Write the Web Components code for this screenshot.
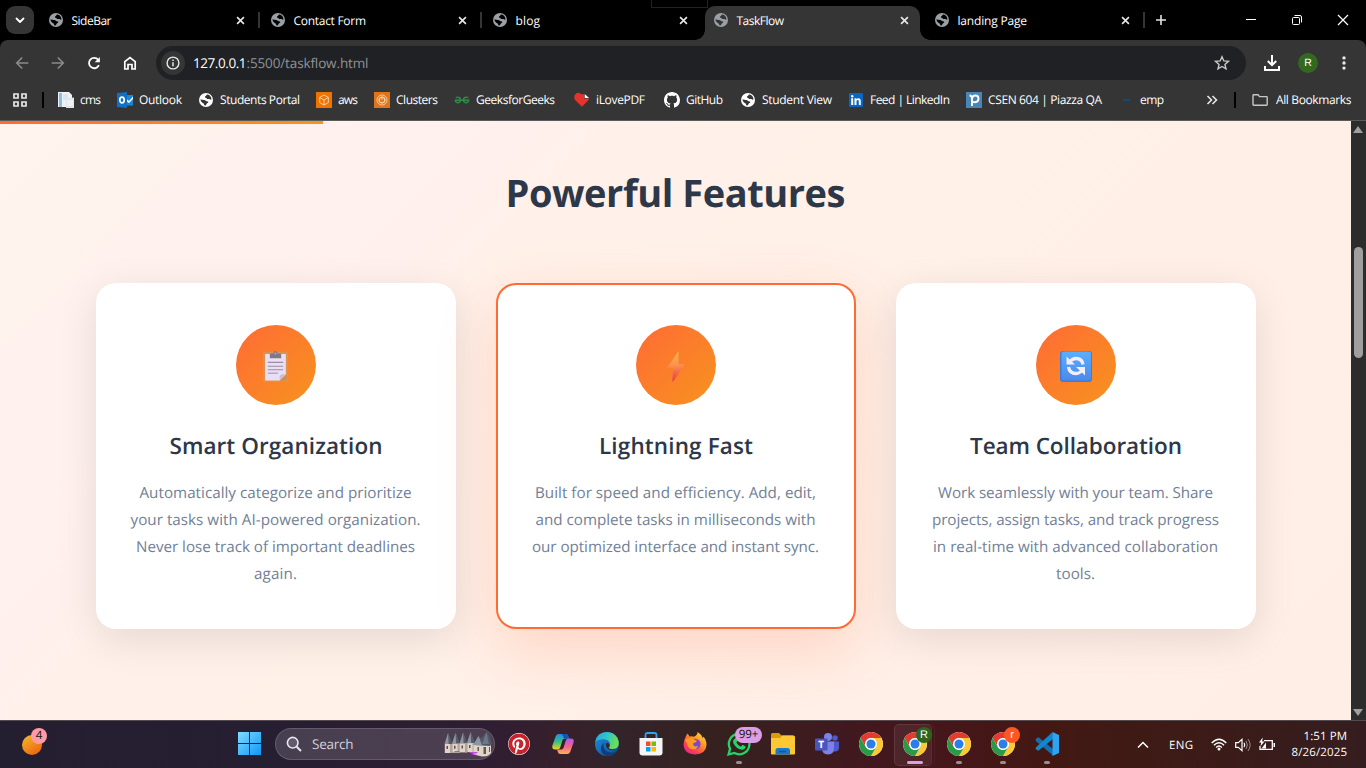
<!DOCTYPE html>
<html lang="en">
<head>
<meta charset="utf-8">
<title>TaskFlow</title>
<style>
html,body{margin:0;padding:0;height:100%;overflow:hidden;background:#000}
body{font-family:"Open Sans","Noto Sans",sans-serif;text-rendering:geometricPrecision}
</style>
</head>
<body>
<desk-top></desk-top>
<script>
const S = (vb, body) => `<svg viewBox="${vb}" xmlns="http://www.w3.org/2000/svg">${body}</svg>`;
const globe = (fg, bg) => S('0 0 14 14', `<circle cx="7" cy="7" r="7" fill="${fg}"/>
<path d="M8.2 1.500c1.700.2 3 1.200 3.700 2.600.3.8.5 1.600.5 2.400-.6.5-1 .2-1.500-.2-.5-.5-1.300-.3-2-.3-.9 0-1.200-.6-1.800-1-.5-.3-1.200-.3-1.200-1 0-.8 1-.7 1.200-1.300.1-.5.500-1 1.100-1.200z" fill="${bg}"/>
<path d="M1.500 6.300c1.200.2 2 .7 3.100.7 1 0 1.900.2 2.500 1 .4.600 1.300.2 1.900.6.500.4.200 1.200-.4 1.400-.9.3-1 .9-1.300 1.500-.2.500-.6.900-1.300.9-.8-.1-.9-.7-1-1.400-.1-.6-.7-.7-1.300-1C2.500 9.400 1.600 8 1.500 6.300z" fill="${bg}"/>`);
const chrome = S('0 0 24 24', `<circle cx="12" cy="12" r="12" fill="#fff"/>
<path d="M1.610 6A12 12 0 0 1 22.390 6L12 6A6 6 0 0 0 6.800 15Z" fill="#e33b2e"/>
<path transform="rotate(120 12 12)" d="M1.610 6A12 12 0 0 1 22.390 6L12 6A6 6 0 0 0 6.800 15Z" fill="#fcc934"/>
<path transform="rotate(240 12 12)" d="M1.610 6A12 12 0 0 1 22.390 6L12 6A6 6 0 0 0 6.800 15Z" fill="#2a9a47"/>
<circle cx="12" cy="12" r="5.700" fill="#fff"/><circle cx="12" cy="12" r="4.500" fill="#2b7de9"/>`);
const box = (c, in_) => S('0 0 16 16', `<rect width="16" height="16" fill="${c}"/>${in_}`);
const st = 'fill="none" stroke-linecap="round" stroke-linejoin="round"';
const turret = x => `<path d="M${x} 12l3.500-11 4 11z" fill="#8d95a2"/><path d="M${x+3.5} 1l4.200 11h-3.500z" fill="#525b69"/><path d="M${x+.3} 12h7.500v9h-7.500z" fill="#e0d5cb"/><path d="M${x+5.500} 12h2.300v9h-2.300z" fill="#b3a49b"/><path d="M${x+2} 14h1.500v3h-1.500z" fill="#62503f"/>`;

const ICONS = {
  globe: globe('#9aa0a6', '#000'), globeTab: globe('#9aa0a6', '#353535'), globeWhite: globe('#fff', '#353535'),
  down: S('0 0 10 10', `<path ${st} stroke="#fff" stroke-width="1.800" d="M1.500 3.500L5 7l3.500-3.500"/>`),
  x: S('0 0 10 10', `<path fill="none" stroke="#e8e8e8" stroke-width="1.800" d="M1.200 1.200l7.600 7.600M8.800 1.200L1.200 8.800"/>`),
  plus: S('0 0 12 12', `<path d="M6 1v10M1 6h10" stroke="#e3e3e3" stroke-width="1.600"/>`),
  min: S('0 0 12 12', `<path d="M1 5.500h10" stroke="#fff"/>`),
  max: S('0 0 12 12', `<rect x="1.500" y="3.500" width="7" height="7" rx="1" fill="none" stroke="#fff"/><path d="M3.500 1.500H9a1.500 1.500 0 0 1 1.500 1.500v5.500" fill="none" stroke="#fff"/>`),
  close: S('0 0 12 12', `<path d="M1 1l10 10M11 1L1 11" stroke="#fff" stroke-width="1.200"/>`),
  back: S('0 0 14 14', `<path fill="none" stroke="#8b8b8b" stroke-width="1.600" d="M13.300 7H2M7.200 1.500L1.700 7l5.500 5.500"/>`),
  fwd: S('0 0 14 14', `<path fill="none" stroke="#8b8b8b" stroke-width="1.600" d="M.700 7H12M6.800 1.500L12.300 7l-5.500 5.500"/>`),
  reload: S('0 0 14 14', `<path fill="none" stroke="#fff" stroke-width="1.800" d="M11.900 9.200A5.200 5.200 0 1 1 11.200 3.700"/><path fill="#fff" d="M12.900 1v5.200H7.700z"/>`),
  home: S('0 0 14 14', `<path fill="none" stroke="#fff" stroke-width="1.700" d="M1.800 5.700L7 1.500l5.200 4.200v7.300H9V8.500H5V13H1.800z"/>`),
  info: S('0 0 14 14', `<circle cx="7" cy="7" r="5.900" fill="none" stroke="#e8e8e8" stroke-width="1.400"/><path d="M7 6.300v4M7 3.600v1.500" stroke="#e8e8e8" stroke-width="1.500"/>`),
  star: S('0 0 16 16', `<path fill="none" stroke="#c9c9c9" stroke-width="1.400" d="M8 1.700l1.850 4.250 4.600.4-3.500 3.050 1.050 4.500L8 11.500l-4 2.400 1.050-4.500-3.500-3.050 4.600-.4z"/>`),
  download: S('0 0 16 16', `<path fill="none" stroke="#fff" stroke-width="2" d="M8 0v9.500M3.800 6L8 10.200 12.200 6M1 11v4h14v-4"/>`),
  dots: S('0 0 14 14', `<g fill="#e8e8e8"><circle cx="7" cy="1.900" r="1.700"/><circle cx="7" cy="7" r="1.700"/><circle cx="7" cy="12.100" r="1.700"/></g>`),
  apps: S('0 0 14 14', `<g fill="none" stroke="#e8e8e8" stroke-width="1.700"><path d="M1 1h4v4H1zM9 1h4v4H9zM1 9h4v4H1zM9 9h4v4H9z"/></g>`),
  more: S('0 0 12 12', `<path fill="none" stroke="#e8e8e8" stroke-width="1.600" d="M1.500 2l4 4-4 4M6.500 2l4 4-4 4"/>`),
  folder: S('0 0 16 12', `<path fill="none" stroke="#c7c7c7" stroke-width="1.400" d="M1 1.500q0-.7.700-.7H6l1.600 1.800h7q.6 0 .6.700v7.200q0 .7-.7.700H1.700q-.7 0-.7-.7z"/>`),
  cms: S('0 0 16 16', `<path d="M0 0h11l3 3v12H0z" fill="#eef2f6"/><path d="M1 1h3v14H1z" fill="#8fbce0"/><path d="M5 3h5M5 5h5M5 7h4" stroke="#ccd6df"/><path d="M8 6.500l8-1V16H8z" fill="#dfe5ea"/><path d="M9 9h6M9 11h6M9 13h6" stroke="#fff"/>`),
  outlook: S('0 0 16 16', `<path d="M9 3h7v10H9z" fill="#fff"/><path d="M9 3h7v1.500L12 9 9 6.500zM9 9l3 2 4-4v6.500H9z" fill="#1a86d9"/><path d="M0 1l10-1v16L0 15z" fill="#0f70c4"/><ellipse cx="5" cy="8" rx="2.200" ry="2.900" fill="none" stroke="#fff" stroke-width="1.700"/>`),
  aws: box('#ee7303', `<path fill="none" stroke="#ffe3c4" stroke-width=".8" d="M8 3l4.300 2.400v5.200L8 13.100l-4.300-2.500V5.400zM3.700 5.400L8 8l4.300-2.600M8 8v5"/>`),
  clusters: box('#df741b', `<g fill="none" stroke="#ffdfba" stroke-width=".8"><circle cx="8" cy="8" r="5"/><circle cx="8" cy="8" r="3.100"/><path d="M8 5l2.600 1.500v3L8 11 5.400 9.500v-3zL8 8"/></g>`),
  gfg: S('0 0 16 16', `<g fill="none" stroke="#2f8d46" stroke-width="1.400"><path d="M1.800 5.900q1-.9 2.400-.7Q6.600 5.600 6.600 8t-2.400 2.700Q1.500 10.700 1.300 8.200h13.400q-.2 2.500-2.900 2.500Q9.400 10.400 9.400 8t2.400-2.800q1.400-.2 2.400.7"/></g>`),
  pdf: S('0 0 16 16', `<path fill="#e5322d" d="M1 2.700Q3-.2 6 1.200L8 2.500 10 1.700V6.500h5.300q0 1-1.400 2.300L8 14.700 1.800 8.800Q-1 5.500 1 2.700z"/><path fill="#fff" d="M10.700 2L15 6h-4.300z"/>`),
  github: S('0 0 16 16', `<path fill="#fff" d="M8 0C3.580 0 0 3.580 0 8c0 3.540 2.290 6.530 5.470 7.590.4.070.55-.17.55-.38 0-.19-.01-.82-.01-1.490-2.010.37-2.530-.49-2.690-.94-.09-.23-.48-.94-.82-1.130-.28-.15-.68-.52-.01-.53.63-.01 1.080.58 1.230.82.72 1.210 1.870.87 2.330.66.07-.52.28-.87.51-1.070-1.780-.2-3.640-.89-3.640-3.950 0-.87.31-1.590.82-2.150-.08-.2-.36-1.020.08-2.120 0 0 .67-.21 2.200.82.64-.18 1.320-.27 2-.27s1.360.09 2 .27c1.530-1.040 2.200-.82 2.200-.82.44 1.100.16 1.920.08 2.120.51.56.82 1.270.82 2.150 0 3.070-1.870 3.750-3.650 3.950.29.25.54.73.54 1.480 0 1.070-.01 1.930-.01 2.200 0 .21.15.46.55.38A8.010 8.010 0 0 0 16 8c0-4.420-3.580-8-8-8z"/>`),
  linkedin: S('0 0 14 14', `<rect width="14" height="14" rx="1" fill="#0a66c2"/><path fill="#fff" d="M2.200 5.300h2V12h-2zM5.500 5.300h1.900v.9c.9-1.500 4.400-1.500 4.400 1.700V12h-2V8.500c0-2.100-2.300-1.900-2.300 0V12h-2z"/><circle cx="3.200" cy="3.200" r="1.200" fill="#fff"/>`),
  piazza: box('#4a86b5', `<path fill="none" stroke="#fff" stroke-width="1.900" d="M3.500 3.500Q6 3.600 6 6.500v7.500M6 7.500q0-4 3.500-4Q12.500 3.500 12.500 6.700T9 10.300q-2 0-3-1.300"/>`),
  emp: S('0 0 16 16', `<path d="M5 8h7" stroke="#0d4f86" stroke-width="1.800"/>`),
  clipboard: S('0 0 24 30', `<rect x="0" y="1" width="24" height="29" rx="1" fill="#dc9352"/><path d="M2 3h20v19.500l-6 6H2z" fill="#e8dff3"/><path d="M16 28.500v-3q0-3 3-3h3z" fill="#cbbcda"/><path d="M16.500 28.500l6-6v6z" fill="#d88a4a"/><path d="M6.500 7V3.500q0-1 1-1H10Q10 0 12 0t2 2.500h2.500q1 0 1 1V7z" fill="#857687"/><circle cx="12" cy="2.500" r="1" fill="#b5a6b8"/><path d="M4.500 11h15M4.500 14.700h15M4.500 18.200h15" stroke="#9c8ca5"/><path d="M4.500 21.500h10" stroke="#b7abc4" stroke-width="1.500"/>`),
  bolt: S('0 0 18 32', `<defs><linearGradient id="g" x2="0" y2="1"><stop stop-color="#f9b645"/><stop offset=".45" stop-color="#fb944b"/><stop offset="1" stop-color="#e8354d"/></linearGradient></defs><path fill="url(#g)" d="M11.500 0L.6 16q-.4 1 .6 1h4.900L5.400 30q0 1.200.9.300L17.300 14.200q.4-1-.7-1h-5V.8q0-.8-.100-.8z"/>`),
  sync: S('0 0 32 31', `<defs><linearGradient id="g" x2="0" y2="1"><stop stop-color="#5aaeff"/><stop offset="1" stop-color="#4a8aea"/></linearGradient></defs><rect width="32" height="31" rx="3" fill="#3f7bdc"/><rect x="1.500" y=".5" width="29.500" height="29" rx="2.500" fill="url(#g)"/><g fill="none" stroke="#f4edff" stroke-width="3.300"><path d="M23 13.500Q22 7.500 16 7.500q-4 0-6.500 4"/><path d="M8.500 16q1 6.500 7.500 6.500 4 0 6.500-4"/></g><path fill="#f4edff" d="M6.500 5.500v8h8.500zM25 24.500v-8.500h-9z"/>`),
  weather: S('0 0 20 20', `<defs><linearGradient id="g" x2=".7" y2="1"><stop stop-color="#f5bd2d"/><stop offset="1" stop-color="#ee6410"/></linearGradient></defs><circle cx="10" cy="10" r="10" fill="url(#g)"/>`),
  win: S('0 0 24 24', `<defs><linearGradient id="g" gradientUnits="userSpaceOnUse" x1="0" y1="0" x2="24" y2="24"><stop stop-color="#7fdcff"/><stop offset="1" stop-color="#0a94f7"/></linearGradient></defs><path fill="url(#g)" d="M0 0h11v11H0zM12 0h11v11H12zM0 12h11v11H0zM12 12h11v11H12z"/>`),
  search: S('0 0 16 16', `<circle cx="6.700" cy="6.700" r="5.300" fill="#746d82" fill-opacity=".6" stroke="#e9e7ee" stroke-width="1.600"/><path d="M10.700 10.700l4.300 4.300" stroke="#e9e7ee" stroke-width="2"/>`),
  castle: S('0 0 48 25', `<g>${turret(0)}</g><g transform="translate(0 -.3)">${turret(7.5)}</g><g transform="translate(0 -.6)">${turret(15)}</g><g transform="translate(0 -.9)">${turret(22.5)}</g><path d="M29 12h17.500v9q-3 4-9 3.500l-8.500-2z" fill="#e0d5cb"/><path d="M29 13l5-9 3 2 5-6q3 1 5.500 12l-2 2z" fill="#4f5866"/><path d="M34 4l3.500 9h-9z" fill="#8c95a2"/><path d="M42 0l-4.500 12h7z" fill="#6d7684"/><path d="M39 15h2.500v7H39zM33 15h1.500v4H33zM44.500 15h1v5h-1z" fill="#6b5747"/><path d="M10 19.500h5M25 20.500h8M27 22h5" stroke="#c24be0" stroke-width="1.200"/>`),
  pinterest: S('0 0 24 24', `<circle cx="12" cy="12" r="11.900" fill="#fff"/><path transform="translate(.6 .6) scale(.95)" fill="#c8232c" d="M12.017 0C5.396 0 .029 5.367.029 11.987c0 5.079 3.158 9.417 7.618 11.162-.105-.949-.199-2.403.041-3.439.219-.937 1.406-5.957 1.406-5.957s-.359-.72-.359-1.781c0-1.663.967-2.911 2.168-2.911 1.024 0 1.518.769 1.518 1.688 0 1.029-.653 2.567-.992 3.992-.285 1.193.6 2.165 1.775 2.165 2.128 0 3.768-2.245 3.768-5.487 0-2.861-2.063-4.869-5.008-4.869-3.410 0-5.409 2.562-5.409 5.199 0 1.033.394 2.143.889 2.741.099.12.112.225.085.345-.09.375-.293 1.199-.334 1.363-.053.225-.172.271-.401.165-1.495-.69-2.433-2.878-2.433-4.646 0-3.776 2.748-7.252 7.920-7.252 4.158 0 7.392 2.967 7.392 6.923 0 4.135-2.607 7.462-6.233 7.462-1.214 0-2.354-.629-2.758-1.379l-.749 2.848c-.269 1.045-1.004 2.352-1.498 3.146 1.123.345 2.306.535 3.550.535 6.607 0 11.985-5.365 11.985-11.987C23.970 5.390 18.592.026 11.985.026z"/>`),
  copilot: S('0 0 24 22', `<defs><linearGradient id="a" x2="0" y2="1"><stop stop-color="#1d8fe8"/><stop offset=".5" stop-color="#35bf8c"/><stop offset="1" stop-color="#f2d21f"/></linearGradient><linearGradient id="b" x2="0" y2="1"><stop stop-color="#b259e6"/><stop offset=".5" stop-color="#f0638f"/><stop offset="1" stop-color="#ffae57"/></linearGradient></defs><path fill="url(#a)" d="M4 2.500Q4.800 0 7.500 0H15q2 0 2.700 2.300L18.500 5H14q-2 0-2.600 2L9 14.500Q8.300 17 6 17H3.500Q-.6 17 .3 13z"/><path fill="#1750c4" d="M10.500 0H15q2 0 2.700 2.300L18.500 5H14.500q-2.500 0-2-2z"/><path fill="url(#b)" d="M20 19.500Q19.200 22 16.500 22H9q-2 0-2.700-2.300L5.500 17H10q2 0 2.600-2L15 7.500Q15.700 5 18 5h2.500q4.100 0 3.200 4z"/>`),
  edge: S('0 0 24 24', `<defs><linearGradient id="a" x2="1" y2=".3"><stop stop-color="#2aa5e0"/><stop offset=".5" stop-color="#2fc3d0"/><stop offset="1" stop-color="#6ee04b"/></linearGradient><linearGradient id="b" x2="1" y2="1"><stop stop-color="#1b8fe0"/><stop offset="1" stop-color="#114a91"/></linearGradient></defs><circle cx="12" cy="12" r="12" fill="url(#b)"/><path fill="url(#a)" d="M.3 10Q2 0 12 0q7 0 10.500 6 2 4 1 7.500Q22 17 17.500 17q-3.500 0-3.500-1.600 1.500-1.400 1-4Q14 7.500 9 7.200 3 7 .3 10z"/><path fill="#0f3e7d" d="M8.500 13q0 7 7 7.500 3 .2 6.500-2-3.500 5.500-10 5.500-5-1-6-6-.7-5 4-8-1.500 1-1.500 3z"/><path fill="#36272a" d="M11.500 11q3-.2 3 2.500-.2 1-1 2 .3 1.500 3.400 2.200 3 .4 6-1.200-2 1.800-4.500 1.800-5.500 0-7.400-4-.5-2.500.5-3.300z"/>`),
  store: S('0 0 24 24', `<path fill="none" stroke="#28a8ea" stroke-width="1.800" d="M6.500 6V3q0-2 2-2h7q2 0 2 2v3"/><path fill="#f4f5f7" d="M.5 6h23v14.500q0 3-3 3h-17q-3 0-3-3z"/><path fill="#f25022" d="M7 9.500h4.500V14H7z"/><path fill="#7fba00" d="M12.500 9.500H17V14h-4.500z"/><path fill="#00a4ef" d="M7 15h4.500v4.500H7z"/><path fill="#ffb900" d="M12.500 15H17v4.500h-4.500z"/>`),
  firefox: S('0 0 24 24', `<defs><linearGradient id="a" x1="1" x2=".2" y2="1"><stop stop-color="#fff04a"/><stop offset=".4" stop-color="#ff9a1f"/><stop offset=".75" stop-color="#ff4052"/><stop offset="1" stop-color="#e5258a"/></linearGradient></defs><path fill="url(#a)" d="M3 4l1.300-2.500Q6 3 6.500 4.500q2-.5 3.500 0Q11.500 5 13 3.500q1.500-1 1.700-3.500 3.500 2 5.300 6.500l.3-2Q23.500 8 23.500 13q-.5 9-11.500 9.500Q1 22 .5 13q0-4 1.500-6.500z"/><circle cx="12.300" cy="12" r="5.300" fill="#7a48d8"/><path fill="#ff9a26" d="M2 7.500q4-2 8-1 1.500 2 4 2-.5 2-3.500 2.500-1 2 .5 3 2 1 4-.5-1 4.500-5.500 3.800Q5 17 4 12z"/>`),
  whatsapp: S('0 0 24 24', `<path fill="none" stroke="#25d366" stroke-width="2.300" d="M1.500 22.500l1.600-5.700A10.300 10.300 0 1 1 7.300 21z"/><path fill="#25d366" d="M8.300 6.200q.8-.3 1.100.4l.9 2.200q.1.500-.9 1.700 1.500 3 4.500 4.200l1.300-1.500q.4-.3.800-.1l2.300 1.200q.5.4 0 1.800-1 1.900-3.500 1.700Q8.500 16.500 6.300 11q-1-3 2-4.800z"/>`),
  explorer: S('0 0 24 22', `<path fill="#d99a0b" d="M0 1.500Q0 0 1.500 0H8l2.500 2.500H22V8H0z"/><path fill="#fcc934" d="M0 5h9l2-2.500h11.500Q24 2.500 24 4v16.500q0 1-1 1H1q-1 0-1-1z"/><path fill="#1878cb" d="M4.500 21.500v-4Q4.500 15 7 15h9.500q2.500 0 2.500 2.500v4z"/><path d="M8 18.500h7" stroke="#0d57a0" stroke-width="1.500"/>`),
  teams: S('0 0 24 22', `<circle cx="20" cy="5" r="2.800" fill="#5059c9"/><path fill="#5059c9" d="M16 8.500h8v6q0 4-4 4h-4z"/><circle cx="13" cy="4" r="4" fill="#7b83eb"/><path fill="#7b83eb" d="M7 8.500h12v6.500q0 6.500-6 6.500T7 15z"/><rect y="5.500" width="12.500" height="12" rx="1" fill="#4b53bc"/><text x="6.200" y="15" text-anchor="middle" font-family="Open Sans" font-weight="700" font-size="10" fill="#fff">T</text>`),
  chrome,
  vscode: S('0 0 24 24', `<path fill="#1070b3" d="M1.300 6.500l1.500-1q.7-.3 1.300.2L18 17v6.500L.8 9q-.6-1.500.5-2.500z"/><path fill="#1485cf" d="M.8 15.500L17.500 0 18 7 4 18.300q-.6.500-1.300.2l-1.500-1q-1-.9-.4-2z"/><path fill="#2ea3f2" d="M17.500 0L24 3v18l-6.500 3z"/>`),
  up: S('0 0 12 12', `<path fill="none" stroke="#fff" stroke-width="1.500" d="M1 8.500l5-5 5 5"/>`),
  wifi: S('0 0 16 13', `<g fill="none" stroke="#fff" stroke-width="1.300"><path d="M.7 5Q8-2.500 15.300 5M2.900 7.300Q8 2.200 13.100 7.300M5.100 9.400Q8 6.700 10.900 9.400"/></g><circle cx="8" cy="11" r="1.500" fill="#fff"/>`),
  volume: S('0 0 16 14', `<path fill="none" stroke="#fff" stroke-width="1.200" d="M.7 4.700h2.600L7 1.300v11.400L3.300 9.300H.7zM9 4.800q1.500 2.200 0 4.400"/><path fill="none" stroke="#98868a" d="M11 3q2.800 4 0 8M13 1q4.300 6 0 12"/>`),
  battery: S('0 0 16 14', `<path fill="none" stroke="#fff" stroke-width="1.300" d="M5 2.600h8.300v8.800H1V8"/><path fill="#fff" d="M14.500 5h1.500v4h-1.500zM2.500 10.500l4.500-6v6zM3.700-.5L0 4.500h2.200L1.500 8.200 5.500 3.500H3.200z"/>`)
};

const define = (name, css, html, setup) => customElements.define(name, class extends HTMLElement {
  constructor() { super(); this.attachShadow({ mode: 'open' }); }
  connectedCallback() {
    if (this.ready) return;
    this.ready = true;
    this.shadowRoot.innerHTML = `<style>*{box-sizing:border-box}${css}</style>${typeof html === 'function' ? html(this) : html}`;
    if (setup) setup(this);
  }
});
const A = (e, n, d = '') => e.getAttribute(n) ?? d;
const ico = (n, w, h = w) => `<ui-icon name="${n}" w="${w}" h="${h}"></ui-icon>`;

define('desk-top', `:host{display:flex;flex-direction:column;width:1366px;height:768px;overflow:hidden}
  .main{display:flex;height:599px}`,
  `<tab-strip></tab-strip><nav-bar></nav-bar><bookmark-bar></bookmark-bar>
   <div class="main"><feature-page></feature-page><scroll-bar></scroll-bar></div><task-bar></task-bar>`);

define('tab-strip', `:host{display:flex;height:40px;background:#000;position:relative;padding-left:6px}
  .drop{width:28px;height:28px;margin:6px 4px 0 0;border-radius:9px;background:#353535;display:grid;place-items:center}
  .tabs{display:grid;grid-template-columns:222px 222px 222px 221px 220px}
  .plus{width:32px;display:grid;place-items:center}
  .win{display:grid;grid-template-columns:46px 46px 46px;margin-left:auto;place-items:center}
  .mark{position:absolute;left:651px;top:-1px;width:57px;height:9px;border:1px solid #222}
  .third{padding-right:16px}.last{padding-left:10px}`,
  `<div class="drop">${ico('down', 10)}</div>
  <div class="tabs"><browser-tab w="40" sep>SideBar</browser-tab><browser-tab w="72.500" sep>Contact Form</browser-tab>
  <browser-tab class="third" w="24.500">blog</browser-tab><browser-tab w="47.500" active>TaskFlow</browser-tab><browser-tab class="last" w="69.500" sep>landing Page</browser-tab></div>
  <div class="plus">${ico('plus', 12)}</div>
  <div class="win">${ico('min', 12)}${ico('max', 12)}${ico('close', 12)}</div><div class="mark"></div>`);

define('browser-tab', `:host{display:flex;align-items:center;position:relative;color:#fff;font-size:12px;padding:0 15px 0 11px}
  :host([active]){padding-left:10px}
  :host([active])::before{content:"";position:absolute;z-index:0;left:1px;right:5px;top:6px;bottom:0;background:#353535;border-radius:10px 10px 0 0}
  .f{position:absolute;bottom:0;width:10px;height:10px;display:none}
  :host([active]) .f{display:block}
  .l{left:-9px;background:radial-gradient(circle at 0 0,transparent 9.500px,#353535 10px)}
  .r{right:-5px;background:radial-gradient(circle at 100% 0,transparent 9.500px,#353535 10px)}
  .c{display:flex;align-items:center;width:100%;position:relative}
  .t{margin-left:8.500px;flex:1}
  .s{position:absolute;right:0;top:12px;width:2px;height:16px;background:#353535}
  :host([active]) .c{width:195px;flex:none}`,
  e => `<i class="f l"></i><i class="f r"></i><div class="c">${ico(e.hasAttribute('active') ? 'globeTab' : 'globe', 14)}
   <div class="t"><fit-text w="${A(e, 'w')}">${e.textContent}</fit-text></div>${ico('x', 9)}</div>${e.hasAttribute('sep') ? '<i class="s"></i>' : ''}`);

define('nav-bar', `:host{display:block;height:46px;background:#000}
  .bar{display:flex;align-items:center;height:46px;background:#353535;border-radius:8px 8px 0 0}
  .b{width:36px;display:grid;place-items:center}
  .nav{display:flex;padding-left:4px;width:156px}
  .url{display:flex;align-items:center;width:1090px;height:34px;border-radius:17px;background:#202124;padding:0 16px 0 5px;color:#fff;font-size:13.500px}
  .i{width:24px;height:24px;border-radius:50%;background:#353535;display:grid;place-items:center;margin-right:8px}
  .p{color:#909398;flex:1}
  .act{display:grid;grid-template-columns:36px 36px 36px;margin-left:8px;place-items:center}
  .av{width:20px;height:20px;border-radius:50%;background:#33691e;color:#fff;font:10.500px/21px "Liberation Sans",sans-serif;text-align:center}`,
  `<div class="bar"><div class="nav">${['back', 'fwd', 'reload', 'home'].map(n => `<div class="b">${ico(n, 14)}</div>`).join('')}</div>
  <div class="url"><div class="i">${ico('info', 14)}</div><fit-text w="53.500">127.0.0.1</fit-text><span class="p"><fit-text w="122">:5500/taskflow.html</fit-text></span>${ico('star', 16)}</div>
  <div class="act">${ico('download', 16)}<div class="av">R</div>${ico('dots', 14)}</div></div>`);

const marks = [['cms', 59, 21, 'cms'], ['outlook', 81, 43, 'Outlook'], ['globeWhite', 118, 80, 'Students Portal'], ['aws', 58, 20, 'aws'], ['clusters', 80, 42, 'Clusters'], ['gfg', 120, 79, 'GeeksforGeeks'], ['pdf', 90, 49, 'iLovePDF'], ['github', 76, 37, 'GitHub'], ['globeWhite', 108, 70, 'Student View'], ['linkedin', 118, 80, 'Feed | LinkedIn'], ['piazza', 152, 114, 'CSEN 604 | Piazza QA'], ['emp', 88, 24, 'emp']];
define('bookmark-bar', `:host{display:flex;align-items:center;height:35px;background:#353535;border-bottom:1px solid #5a5a5a;padding:0 0 6px 13px}
  .s{width:2px;height:16px;background:#000;margin:0 14px 0 15px}
  .s.e{margin:0 16px 0 16px}
  .all{margin:-1px 0 0 8px;color:#fff;font-size:12px}`,
  `${ico('apps', 14)}<i class="s"></i>${marks.map(m => `<book-mark icon="${m[0]}" slotw="${m[1]}" w="${m[2]}">${m[3]}</book-mark>`).join('')}${ico('more', 12)}<i class="s e"></i>${ico('folder', 16, 12)}<span class="all"><fit-text w="75.500">All Bookmarks</fit-text></span>`);
define('book-mark', `:host{display:flex;align-items:center;gap:6px;color:#fff;font-size:12px;flex:none}
  .i{width:16px;display:grid;place-items:center}.t{margin-top:-1px}`,
  e => { e.style.width = A(e, 'slotw') + 'px'; const n = A(e, 'icon'), s = /globe|linked/.test(n) ? 14 : 16; return `<span class="i">${ico(n, s)}</span><span class="t"><fit-text w="${A(e, 'w')}">${e.textContent}</fit-text></span>`; });

define('feature-page', `:host{display:block;width:1351px;height:599px;background:linear-gradient(135deg,#fff4ee 0%,#fff0ed 28%,#fff1e9 33%,#ffeee5 100%);position:relative;overflow:hidden}
  .prog{width:323px;height:3px;background:linear-gradient(90deg,#ff6b35,#f7931e)}
  h2{margin:42px 0 0;height:54px;text-align:center;font-size:38px;line-height:54px;font-weight:700;color:#2d3748}
  .grid{display:grid;grid-template-columns:repeat(3,360px);gap:40px;margin:63px 0 0 96px;height:346px}`,
  `<div class="prog"></div><h2><fit-text w="340">Powerful Features</fit-text></h2>
  <div class="grid">
  <feature-card icon="clipboard" iw="25" ih="31" tw="213" heading="Smart Organization" lines="272:Automatically categorize and prioritize|290:your tasks with AI-powered organization.|279:Never lose track of important deadlines|43:again."></feature-card>
  <feature-card hot icon="bolt" iw="18" ih="32" tw="154" heading="Lightning Fast" lines="281:Built for speed and efficiency. Add, edit,|280:and complete tasks in milliseconds with|287:our optimized interface and instant sync."></feature-card>
  <feature-card icon="sync" iw="32" ih="31" tw="212" heading="Team Collaboration" lines="275:Work seamlessly with your team. Share|287:projects, assign tasks, and track progress|285:in real-time with advanced collaboration|39:tools."></feature-card></div>`);
define('feature-card', `:host{display:flex;flex-direction:column;align-items:center;background:#fff;border-radius:20px;border:2px solid transparent;background-clip:border-box;padding-top:40px;box-shadow:0 10px 40px rgba(0,0,0,.1)}
  :host([hot]){border-color:#ff6b35;box-shadow:0 20px 60px rgba(255,107,53,.2)}
  .o{width:80px;height:80px;border-radius:50%;background:linear-gradient(135deg,#ff6b35,#f7931e);display:grid;place-items:center;padding:3px 1px 0 0}
  h3{margin:24px 0 18px;height:33px;line-height:33px;font-size:22.500px;font-weight:600;color:#2d3748}
  p{margin:0 1px 0 0;display:flex;flex-direction:column;align-items:center;font-size:15.200px;line-height:27px;color:#718096}`,
  e => `<div class="o">${ico(A(e, 'icon'), A(e, 'iw'), A(e, 'ih'))}</div><h3><fit-text w="${A(e, 'tw')}">${A(e, 'heading')}</fit-text></h3>
  <p>${A(e, 'lines').split('|').map(l => { const i = l.indexOf(':'); return `<fit-text w="${l.slice(0, i)}">${l.slice(i + 1)}</fit-text>`; }).join('')}</p>`);

define('scroll-bar', `:host{display:flex;flex-direction:column;align-items:center;width:15px;height:599px;background:#2c2c2c;padding:5px 0 4px}
  .a{width:0;height:0;border:5px solid transparent;border-top:0;border-bottom:7px solid #9f9f9f;margin-right:1px}
  .d{border-top:7px solid #9f9f9f;border-bottom:0;margin-top:auto}
  .t{width:9px;height:111px;border-radius:5px;background:#9f9f9f;margin-top:114px}`,
  `<i class="a"></i><i class="t"></i><i class="a d"></i>`);

define('task-bar', `:host{display:flex;height:48px;border-top:1px solid #554a50;color:#fff;
   background:linear-gradient(90deg,#241f30 0,#261e31 270px,#2e1d33 480px,#37202b 560px,#33242a 620px,#36211f 720px,#40191f 850px,#45161b 930px,#431813 1050px,#3f1a14 1120px,#351d1f 1366px)}
  .w{width:228px;padding-left:10px;display:flex;align-items:center}
  .q{width:220px;height:32px;margin:7px 2px 0 3px;border-radius:16px;background:#ffffff26;border:1px solid #ffffff26;display:flex;align-items:center;padding:0 1px 0 10px;font-size:13.500px;color:#d5d0da}
  .q span{flex:1;margin-left:10px}
  .tray{display:flex;align-items:center;margin-left:68px;font-size:11.500px}
  .clock{display:flex;flex-direction:column;align-items:flex-end;font-size:11.500px;line-height:16px;width:72px}
  .eng{margin:2px 18px 0 20px}
  .g{width:8px}`,
  `<div class="w"><task-icon icon="weather" iw="20" badge="4" bc="#ff9ba5" dark off></task-icon></div>
  <task-icon icon="win" iw="24"></task-icon>
  <div class="q">${ico('search', 16)}<span><fit-text w="41.500">Search</fit-text></span>${ico('castle', 49, 25)}</div>
  <task-icon icon="pinterest" iw="22"></task-icon><task-icon icon="copilot" iw="22" ih="20"></task-icon><task-icon icon="edge" iw="24"></task-icon>
  <task-icon icon="store" iw="24"></task-icon><task-icon icon="firefox" iw="24"></task-icon><task-icon icon="whatsapp" iw="24" badge="99+" bc="#dd9ee8" dark run wide></task-icon>
  <task-icon icon="explorer" iw="24" ih="22"></task-icon><task-icon icon="teams" iw="24" ih="22"></task-icon><task-icon icon="chrome" iw="24"></task-icon>
  <task-icon icon="chrome" iw="24" badge="R" bc="#2c6420" active></task-icon><task-icon icon="chrome" iw="24" run></task-icon>
  <task-icon icon="chrome" iw="24" badge="r" bc="#ff5722" run></task-icon><task-icon icon="vscode" iw="24" run></task-icon>
  <div class="tray">${ico('up', 12)}<span class="eng"><fit-text w="24">ENG</fit-text></span>${ico('wifi', 16, 13)}<i class="g"></i>${ico('volume', 16, 14)}<i class="g"></i>${ico('battery', 16, 14)}
  <div class="clock"><fit-text w="43.500">1:51 PM</fit-text><fit-text w="55.500">8/26/2025</fit-text></div></div>`);
define('task-icon', `:host{display:grid;place-items:center;width:44px;height:46px;position:relative;flex:none}
  :host([active])::before,:host([active])::after{content:"";position:absolute;left:1px;top:3px;width:36px;height:40px;border-radius:5px;border:1px solid #ffffff0c;background:#ffffff10}
  :host([active])::after{width:39px;background:none}
  ui-icon{position:relative}
  .b{position:absolute;z-index:2;left:23px;top:6px;width:16px;height:16px;border-radius:8px;text-align:center;color:#fff;font:11px/16px "Liberation Sans",sans-serif}
  :host([dark]) .b{color:#111;font:11.500px/16px "Open Sans",sans-serif}
  :host([wide]) .b{left:18px;width:27px}
  :host([off]) .b{left:21px}
  .r{position:absolute;bottom:3px;left:19px;width:6px;height:3px;border-radius:2px;background:#9b8c8d}
  :host([active]) .r{left:14px;width:16px;background:#dd9ee8;z-index:3}`,
  e => `${ico(A(e, 'icon'), A(e, 'iw'), A(e, 'ih', A(e, 'iw')))}${A(e, 'badge') ? `<span class="b" style="background:${A(e, 'bc')}">${A(e, 'badge')}</span>` : ''}${e.hasAttribute('run') || e.hasAttribute('active') ? '<i class="r"></i>' : ''}`);

define('ui-icon', `:host{display:block;flex:none}svg{display:block;width:100%;height:100%;overflow:visible}`,
  e => { e.style.width = A(e, 'w') + 'px'; e.style.height = A(e, 'h') + 'px'; return ICONS[A(e, 'name')]; });

/* One line of text whose tracking is adjusted so that it spans a given width. */
define('fit-text', `:host{display:block;white-space:nowrap;text-align:left}span{display:inline-block;margin-right:-20px}`, `<span><slot></slot></span>`,
  e => {
    const w = +A(e, 'w'), s = e.shadowRoot.querySelector('span'), n = e.textContent.length;
    e.style.width = w + 'px';
    s.style.letterSpacing = ((w - s.getBoundingClientRect().width) / (n - 1)) + 'px';
    if (e.parentNode.tagName === 'H2') e.style.margin = '0 auto';
  });
</script>
</body>
</html>
